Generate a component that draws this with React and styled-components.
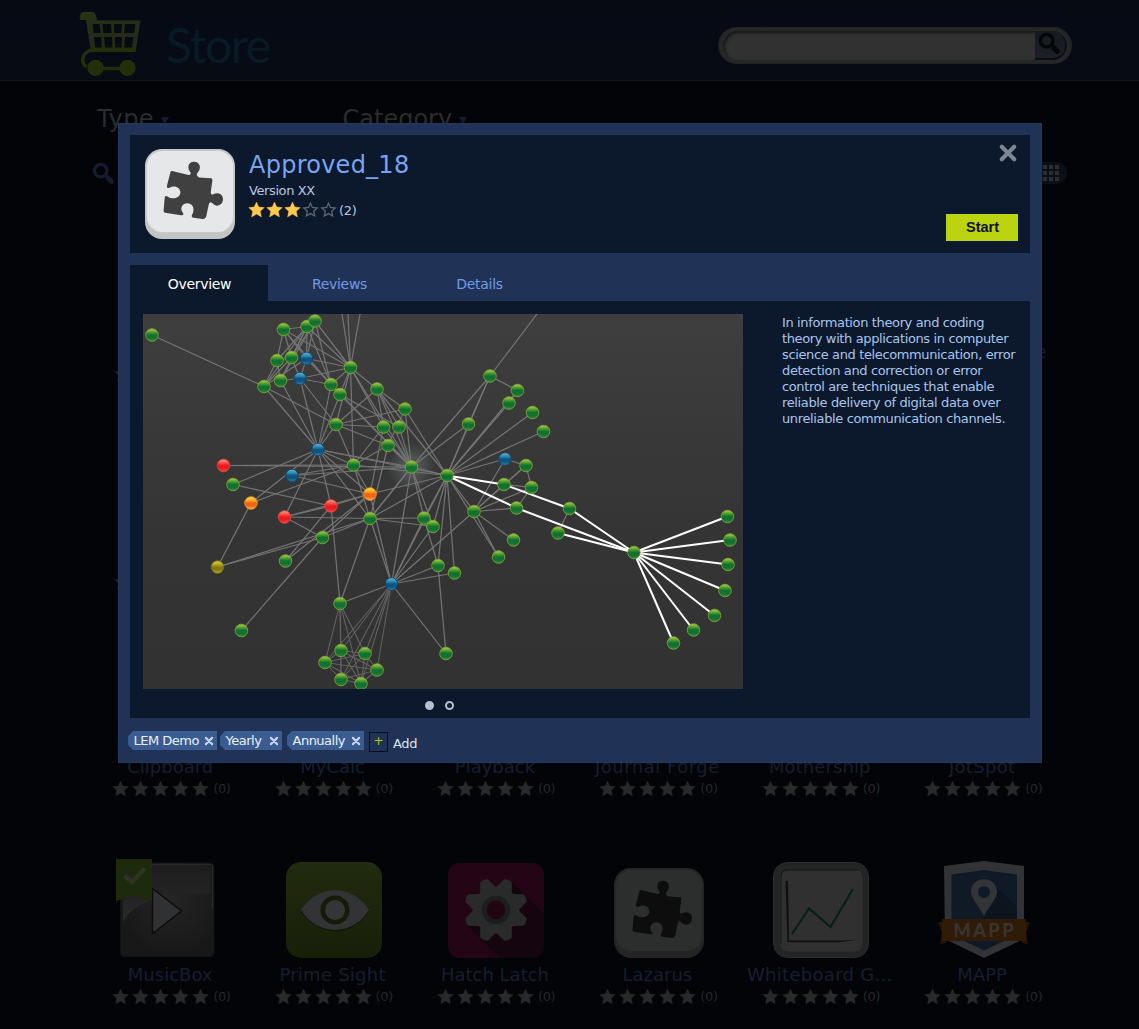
import React from "react";
import styled, { createGlobalStyle } from "styled-components";

const Global = createGlobalStyle`
  * { box-sizing: border-box; }
  body { margin: 0; background: #020408; font-family: "DejaVu Sans", Verdana, sans-serif; }
  svg { display: block; }
`;

/* ---------- store page ---------- */
const Page = styled.div`
  width: 1139px;
  height: 1029px;
  overflow: hidden;
  background: #020408;
`;
const TopBar = styled.header`
  display: flex;
  justify-content: space-between;
  align-items: flex-start;
  height: 81px;
  padding: 0 67px 0 78px;
  border-bottom: 1px solid #10151e;
  background: linear-gradient(#060a12, #050a14 25%, #060b14);
`;
const Brand = styled.div`
  display: flex;
  gap: 22px;
  padding-top: 10px;
`;
const BrandName = styled.div`
  font: 400 48px/60px Lato, "Open Sans", sans-serif;
  color: #071a26;
  letter-spacing: -1.5px;
  padding-top: 5px;
`;
const Search = styled.div`
  display: flex;
  width: 354px;
  height: 37px;
  margin-top: 27px;
  padding: 4px 5px;
  border-radius: 19px;
  background: #262727;
  box-shadow: inset 0 0 2px #181b20;
`;
const SearchField = styled.div`
  flex: 1;
  border-radius: 15px 0 0 15px;
  background: #313131;
  box-shadow: inset 2px 2px 3px #17191d;
`;
const SearchButton = styled.div`
  width: 32px;
  border-radius: 0 15px 15px 0;
  background: linear-gradient(#151920, #1b2028);
  border-bottom: 2px solid #0a0d13;
  border-right: 2px solid #0e1218;
  padding: 1px 0 0 3px;
`;
const Filters = styled.div`
  display: flex;
  height: 73px;
  padding: 24px 0 0 97px;
`;
const Filter = styled.div`
  display: flex;
  align-items: baseline;
  gap: 7px;
  width: 245.5px;
  font-size: 24px;
  line-height: 28px;
  letter-spacing: ${(p) => p.$track || 0}px;
  color: #2b2c2d;
`;
const Caret = styled.i`
  align-self: flex-start;
  margin-top: 12px;
  border: 4.5px solid transparent;
  border-top: 7px solid #131d31;
  border-bottom: 0;
`;
const Tools = styled.div`
  display: flex;
  justify-content: space-between;
  height: 77px;
  padding: 8px 72px 0 92px;
`;
const GridToggle = styled.div`
  display: grid;
  grid-template-columns: repeat(3, 4px);
  grid-auto-rows: 4px;
  gap: 2px;
  height: 22px;
  width: 32px;
  padding: 3px 0 0 8px;
  border-radius: 0 11px 11px 0;
  background: #0b0f18;
`;
const Cell = styled.i`
  background: #2c2d2f;
`;
const Apps = styled.main`
  display: grid;
  grid-template-columns: repeat(6, 162.4px);
  grid-auto-rows: 207.6px;
  padding-left: 89px;
`;
const Tile = styled.section`
  display: flex;
  flex-direction: column;
  align-items: center;
`;
const TileIcon = styled.div`
  display: flex;
  align-items: flex-end;
  height: 104px;
  margin-left: ${(p) => p.$shift || 0}px;
`;
const TileName = styled.div`
  height: 31px;
  font-size: 18px;
  line-height: 34px;
  color: #131f31;
  white-space: nowrap;
  letter-spacing: ${(p) => p.$track || 0}px;
  margin-left: ${(p) => p.$shift || 0}px;
`;
const Stars = styled.div`
  display: flex;
  align-items: center;
  gap: ${(p) => p.$gap}px;
  height: 15px;
  margin-left: ${(p) => p.$shift || 0}px;
`;
const Count = styled.span`
  font-size: 13px;
  letter-spacing: -0.35px;
  line-height: 15px;
  color: ${(p) => p.$color};
  min-width: 18px;
  position: relative;
  top: ${(p) => p.$drop || 0}px;
`;

/* ---------- listing window ---------- */
const Layer = styled.div`
  position: fixed;
  inset: 0;
  padding: 123px 0 0 118px;
`;
const Window = styled.div`
  display: flex;
  flex-direction: column;
  width: 924px;
  height: 640px;
  padding: 12px 12px 0;
  background: #203255;
  box-shadow: inset 0 0 0 1px #243960;
`;
const Summary = styled.div`
  display: flex;
  justify-content: space-between;
  height: 118px;
  padding: 14px 12px 12px 15px;
  background: #0c182b;
`;
const Identity = styled.div`
  display: flex;
  gap: 14px;
`;
const Title = styled.div`
  font-size: 24px;
  line-height: 28px;
  letter-spacing: 0.25px;
  color: #78a4f2;
  padding-top: 2px;
`;
const Version = styled.div`
  font-size: 13px;
  letter-spacing: -0.4px;
  line-height: 20px;
  color: #b4c8e4;
  padding: 2px 0 1px;
`;
const Actions = styled.div`
  display: flex;
  flex-direction: column;
  justify-content: space-between;
  align-items: flex-end;
`;
const Close = styled.button`
  border: 0;
  padding: 0;
  margin: -6px 0 0 0;
  background: none;
`;
const Start = styled.button`
  width: 72px;
  height: 27px;
  border: 0;
  padding: 0 0 1px 1px;
  background: #bcd40f;
  color: #111;
  font: bold 14.5px "Liberation Sans", Arial, sans-serif;
`;
const Tabs = styled.nav`
  display: flex;
  gap: 2px;
  margin-top: 12px;
  height: 36px;
`;
const Tab = styled.div`
  width: 138px;
  padding-left: 1px;
  text-align: center;
  font-size: 14px;
  letter-spacing: -0.3px;
  line-height: 38px;
  color: ${(p) => (p.$active ? "#fff" : "#6f9be8")};
  background: ${(p) => (p.$active ? "#0c182b" : "transparent")};
`;
const Overview = styled.div`
  display: flex;
  height: 417px;
  padding: 13px 12px 0 13px;
  background: #0c182b;
`;
const Gallery = styled.div`
  width: 600px;
  flex: none;
`;
const Pager = styled.div`
  display: flex;
  justify-content: center;
  gap: 11px;
  padding: 12px 8px 0 0;
`;
const Dot = styled.i`
  width: 9px;
  height: 9px;
  border-radius: 50%;
  border: 2px solid #b3c0d8;
  background: ${(p) => (p.$on ? "#b3c0d8" : "transparent")};
`;
const Blurb = styled.p`
  margin: 1px 0 0 39px;
  width: 236px;
  font-size: 13px;
  letter-spacing: -0.37px;
  line-height: 16px;
  color: #a9c5ee;
  white-space: pre;
`;
const TagBar = styled.div`
  display: flex;
  align-items: flex-start;
  padding-top: 13px;
  margin-left: -2px;
`;
const Tag = styled.div`
  display: flex;
  justify-content: space-between;
  align-items: center;
  width: ${(p) => p.$w}px;
  height: 19px;
  margin-right: ${(p) => p.$gap}px;
  padding: 1px 3px 0 5.5px;
  font-size: 13px;
  letter-spacing: -0.5px;
  line-height: 20px;
  color: #e9f0fb;
  white-space: nowrap;
  background: #3b5c91;
  clip-path: polygon(5px 0, 100% 0, 100% 100%, 5px 100%, 0 72%, 0 28%);
`;
const AddBox = styled.div`
  width: 19px;
  height: 20px;
  margin-top: 1px;
  border: 1px solid #0a101c;
  color: #a9c820;
  font-size: 12px;
  line-height: 17px;
  text-align: center;
`;
const AddLabel = styled.div`
  margin: 3px 0 0 5px;
  font-size: 13px;
  letter-spacing: -0.3px;
  line-height: 19px;
  color: #dbe6f7;
`;

/* ---------- drawings ---------- */
const STAR = "M7.5 0 9.800 5 15.300 5.600 11.300 9.300 12.400 14.900 7.500 12.100 2.600 14.900 3.700 9.300 -.3 5.600 5.200 5Z";
const Star = ({ color, hollow }) => (
  <svg width="15" height="15" viewBox="0 0 15 15" overflow="visible">
    <path
      d={hollow ? "M7.5 1.2 9.400 5.400 14.300 6 10.700 9.300 11.700 14 7.500 11.600 3.300 14 4.300 9.300 .7 6 5.600 5.400Z" : STAR}
      fill={hollow ? "none" : color}
      stroke={color}
      strokeWidth={hollow ? 1.3 : 0.4}
    />
  </svg>
);
const Rating = ({ filled, color, empty, gap, count, textColor, shift, drop }) => (
  <Stars $gap={gap} $shift={shift}>
    {[0, 1, 2, 3, 4].map((i) => (
      <Star key={i} color={i < filled ? color : empty} hollow={i >= filled} />
    ))}
    <Count $color={textColor} $drop={drop}>{count}</Count>
  </Stars>
);
const Cross = ({ size, color, width }) => (
  <svg width={size} height={size} viewBox="0 0 16 16">
    <path d="M3 3l10 10M13 3l-10 10" stroke={color} strokeWidth={width} strokeLinecap="round" />
  </svg>
);
const Lens = ({ color, size }) => (
  <svg width={size} height={size} viewBox="0 0 22 22">
    <circle cx="8.3" cy="8.3" r="6" fill="none" stroke={color} strokeWidth="3.2" />
    <path d="M12.6 12.6 19 19" stroke={color} strokeWidth="2.6" />
    <path d="M15.3 15.3 18.6 18.6" stroke={color} strokeWidth="4.8" strokeLinecap="round" />
  </svg>
);
const Cart = () => (
  <svg width="66" height="68" viewBox="78 10 66 68" fill="none">
    <defs>
      <linearGradient id="cart" x1="0" y1="0" x2="0" y2="1">
        <stop offset="0" stopColor="#293215" />
        <stop offset=".5" stopColor="#24291a" />
        <stop offset=".68" stopColor="#22300b" />
        <stop offset="1" stopColor="#223009" />
      </linearGradient>
    </defs>
    <path d="M80 20q-1-8 4-8h8q3 0 4 4l1.500 4.500H140.500L135.500 52H91q-6 1-6.500 8 .5 4.500 3 5.500-1.500 2-1 3-6-3-5.500-9.500 1-8 9.500-10.500L86 20Z" fill="url(#cart)" />
    <g fill="#060a12">
      <path d="M92.500 24h7l1.200 9h-7.100zM102.500 24h8.500l.6 9h-8.200zM114 24h8l-.7 9h-7zM125 24h10.500l-1.500 9h-9.800z" />
      <path d="M94 37h7.200l.7 10.500h-6.700zM104.200 37h7.800l.3 10.500h-7.200zM115 37h7l-.6 10.500h-6.200zM125 37h8.500l-1.700 10.500h-7.500z" />
    </g>
    <path d="M90 68.500h40" stroke="#202d0c" strokeWidth="3.500" />
    <circle cx="95.500" cy="68" r="8.200" fill="#223009" />
    <circle cx="127.500" cy="68" r="8.200" fill="#223009" />
  </svg>
);
const Puzzle = ({ face, side, edge, ink }) => (
  <svg width="90" height="90" viewBox="0 0 90 90">
    <rect width="90" height="90" rx="17" fill={side} />
    <rect x=".6" y=".6" width="88.8" height="83" rx="17" fill={edge} />
    <rect x="2" y="2" width="86" height="81" rx="15.500" fill={face} />
    <path
      fill={ink}
      d="M27 22 42.500 25.800Q46.500 26.300 45.600 23.600C42 20 42.500 12.800 49 12.800c6.500 0 7.500 7 3.700 10.800-1.600 2.200-.7 4.200 1.600 4.800L66 29.200q1.600.2 1.400 2L65.700 43.500q0 2.700 2.300 1.900c4.200-2.700 10-.7 10 4.700 0 6.700-7 8.500-10.500 4.200-1.700-1.700-3.300-1-3.800 1.500L61.200 67.500Q60.200 70.300 57.500 70L48.500 68.800C46 68 46.500 66 47.800 64.400 49 61.500 49.500 54.700 42.500 54.200c-6.200 0-7.500 6-4.800 9.400 1.800 2-.2 3.200-1.600 2.600L20 63.800q-1.600-.4-1.400-2L19.700 48.500q.7-2.500 3.200-.7c5 3.200 11.500 1.200 12.500-3.500.5-6-6-8.500-10.500-5.800-2 1.200-3.300.5-2.900-2L25.500 23q.3-1.200 1.500-1Z"
    />
  </svg>
);
const MusicBox = () => (
  <svg width="100" height="100" viewBox="0 0 100 100">
    <defs>
      <radialGradient id="mb" cx=".55" cy=".4" r=".6">
        <stop offset="0" stopColor="#242424" />
        <stop offset="1" stopColor="#181818" />
      </radialGradient>
      <linearGradient id="shine" x1="0" y1="0" x2="0" y2="1">
        <stop offset="0" stopColor="#1d1d1d" />
        <stop offset="1" stopColor="#292929" />
      </linearGradient>
    </defs>
    <rect x="4.500" y="5" width="93.500" height="93.500" rx="4" fill="url(#mb)" stroke="#111214" />
    <path d="M7 64Q22 34 95 35.500V17q0-10-9-10H7Z" fill="url(#shine)" />
    <path d="M7 6.300h87q2.500 0 2.500 3V50" stroke="#2d2d2d" fill="none" />
    <path d="M36.500 30.500V75.500L65.500 53Z" fill="#303132" stroke="#0d0d0d" strokeWidth="1.500" />
    <path d="M0 1h36v42l-18-5.500L0 43Z" fill="#1e2a0c" />
    <path d="M8.500 17.500l7.500 6.500L28.500 10.500" stroke="#303226" strokeWidth="4.500" fill="none" />
  </svg>
);
const Eye = () => (
  <svg width="96" height="96" viewBox="0 0 96 96">
    <defs>
      <linearGradient id="eye" x1="0" y1="0" x2="0" y2="1">
        <stop offset="0" stopColor="#212b0e" />
        <stop offset="1" stopColor="#181f09" />
      </linearGradient>
    </defs>
    <rect width="96" height="96" rx="15" fill="url(#eye)" />
    <path d="M15 50C34 76 64 76 83 50 64 23 34 23 15 50Z" fill="#12180a" />
    <path d="M15 48C31 21.500 67 21.500 83 48 67 74.500 31 74.500 15 48Z" fill="#323335" />
    <circle cx="49" cy="48" r="12.300" fill="#343537" stroke="#151b07" strokeWidth="4.500" />
  </svg>
);
const Gear = () => (
  <svg width="96" height="95" viewBox="0 0 96 95">
    <defs>
      <clipPath id="gc"><rect width="96" height="95" rx="11" /></clipPath>
    </defs>
    <g clipPath="url(#gc)">
      <rect width="96" height="95" fill="#230515" />
      <path d="M63 18 96 51V95H52L20 63Z" fill="#15050e" />
    </g>
    <g fill="#292b2a">
      {[22.5, 67.5, 112.5, 157.5, 202.5, 247.5, 292.5, 337.5].map((a) => (
        <path key={a} transform={`rotate(${a} 48 47)`} d="M39.500 26 44 15.500Q48 13.800 52 15.500L56.500 26Z" />
      ))}
      <circle cx="48" cy="47" r="23.500" />
    </g>
    <circle cx="48" cy="47" r="11.700" fill="#220514" stroke="#1c1d1d" strokeWidth="5" />
  </svg>
);
const Whiteboard = () => (
  <svg width="96" height="96" viewBox="0 0 96 96">
    <rect x=".5" y=".5" width="95" height="95" rx="14" fill="#232424" stroke="#2b2c2c" />
    <rect x="7" y="7.500" width="82.500" height="82" rx="8" fill="#303030" />
    <path d="M8 82V15q0-7 7-7H85" stroke="#131414" fill="none" />
    <path d="M12.500 19h2.600L16 78.500l52 0 16-.7-18 2.500H14.500Z" fill="#101010" />
    <path d="M19 72 36 46.500 57.500 65 80 27" stroke="#062016" strokeWidth="2.200" fill="none" />
  </svg>
);
const Mapp = () => (
  <svg width="92" height="97" viewBox="0 0 92 97">
    <path d="M46 0 86 5V78L46 97 7 78 6 5Z" fill="#323334" />
    <path d="M46 9 79 13.500V74L46 89.500 13.500 74V13.500Z" fill="#0f1a26" />
    <path d="M57 24 79 46V58H46V54Z" fill="#0c141d" />
    <path fillRule="evenodd" d="M46 18c-7.500 0-13 5.500-13 13 0 6 7 13 13 24 6-11 13-18 13-24 0-7.500-5.500-13-13-13Zm0 7a6 6 0 1 1 0 12 6 6 0 0 1 0-12Z" fill="#333436" />
    <path d="M0 61H8V82L2 83 4 72ZM92 61H84V82L90 83 88 72Z" fill="#2a1307" />
    <rect x="4" y="58" width="84" height="22" fill="#301a08" />
    <text x="15.500" y="76" fontFamily="Lato, sans-serif" fontWeight="900" fontSize="18" textLength="60" fill="#39342f">MAPP</text>
  </svg>
);

/* ---------- network graph ---------- */
const N = {
  a: [152, 335], b: [283.5, 329.5], c: [307, 326.5], d: [315, 321], e: [277, 360.5], f: [291.5, 357.5],
  g: [306.5, 358.5, "b"], h: [264, 386.5], i: [280.5, 380.5], j: [300, 378.5, "b"], k: [350.5, 367.5],
  l: [331, 384.5], m: [340, 394.5], n: [377, 389], o: [405, 409], p: [336, 424.5], q: [383.5, 427],
  r: [399, 427], s: [388, 445.5], t: [318, 449.5, "b"], u: [353.5, 465], v: [411.5, 467], w: [447, 475.5],
  x: [223.5, 465.5, "r"], y: [233, 484.5], z: [292, 475.5, "b"], A: [251, 503, "o"], B: [370, 494, "o"],
  C: [331, 506, "r"], D: [284.5, 517, "r"], E: [370, 518.5], F: [322.5, 537.5], G: [285.5, 561],
  H: [217.5, 567, "y"], I: [241.5, 630.5], J: [340, 603.5], K: [391.5, 584, "b"], L: [424, 518],
  M: [433, 526.5], N: [438, 565.5], O: [454.5, 573], P: [474, 511.5], Q: [516.5, 508], R: [513.5, 540],
  S: [498.5, 557], T: [446, 653.5], U: [504, 484.5], V: [505, 459, "b"], W: [526, 465.5], X: [531.5, 487.5],
  Y: [490, 376], Z: [517.5, 390.5], aa: [509, 403], ab: [532.5, 412.5], ac: [543.5, 431.5], ad: [468.5, 424],
  ae: [569.5, 508.5], af: [558, 533], ag: [634, 552.5], ah: [727.5, 516.5], ai: [730, 540], aj: [728, 564.5],
  ak: [725, 590.5], al: [714.5, 615.5], am: [693.5, 630], an: [673.5, 643], ao: [325, 662.5], ap: [341, 650.5],
  aq: [365, 653.5], ar: [377, 670], as: [341, 679.5], at: [361, 683.5],
};
const OFF = { t1: [342, 314], t2: [348, 314], t3: [360, 314], t4: [537, 314] };
const parse = (s) => s.trim().split(/\s+/).map((p) => p.split("-"));
const GREY = parse(`
  a-h b-c b-e b-f b-g b-k c-f c-g c-h c-e c-k c-l c-i d-i d-f d-k d-l d-g d-k b-l
  e-i e-h f-j f-h g-k g-j g-l g-h i-j j-k j-l j-p j-t i-t h-t h-p l-k m-k l-t m-t m-r m-v l-v
  k-t1 k-t2 k-t3 k-p k-u k-v k-n k-q n-p n-o n-q n-r n-w n-v o-p o-v o-w o-s p-q p-s p-u p-t
  q-u q-B s-v s-u s-E q-v r-v t-u t-v t-w t-y t-A t-C t-B t-E t-D x-u x-v u-w u-z u-A u-E u-B z-B z-v
  v-L v-M v-K v-E v-w v-Y v-ad w-ad w-Y w-aa w-Z w-ab w-ac w-V w-K w-L w-M w-N w-O w-P w-E w-B w-S
  y-C B-D B-F C-D C-G D-E D-F F-H F-I F-E H-E A-H B-G B-K B-C E-K E-J C-J E-L E-M E-v
  K-J K-L K-M K-P K-N K-O K-T L-N N-T P-Q P-R P-S P-U P-V P-X P-W U-X U-W V-W W-X X-Q Y-Z Y-t4 Y-ad Z-aa ae-af`);
const CLUSTER = parse(`
  J-ao J-ap J-aq J-as J-at K-ao K-ap K-aq K-ar K-as K-at ao-ap ao-aq ao-ar ao-as ap-aq ap-ar ap-as ap-at
  aq-ar aq-as aq-at ar-as ar-at as-at ao-at`);
const WHITE = parse("w-U U-ae w-Q Q-ag ae-ag af-ag ag-ah ag-ai ag-aj ag-ak ag-al ag-am ag-an");
const TONES = {
  g: ["#b4d048", "#3f962b", "#127030", "#2a8f38", "#86a433"],
  b: ["#6fb4d6", "#2587b4", "#105580", "#2a88ba", "#12405e"],
  r: ["#ffa08a", "#f84840", "#e81c22", "#fa4a40", "#e04438"],
  o: ["#ffdc50", "#ffa51a", "#f2621a", "#ffb83a", "#ee9a26"],
  y: ["#d8d046", "#b3a81c", "#857b0c", "#bdb22a", "#766f1c"],
};
const Edges = ({ list, color, width }) => (
  <g stroke={color} strokeWidth={width}>
    {list.map(([p, q], i) => {
      const s = N[p];
      const e = N[q] || OFF[q];
      return <line key={i} x1={s[0]} y1={s[1]} x2={e[0]} y2={e[1]} />;
    })}
  </g>
);
const Network = () => (
  <svg width="600" height="375" viewBox="143 314 600 375">
    <defs>
      <linearGradient id="bg" x1="0" y1="0" x2="0" y2="1">
        <stop offset="0" stopColor="#3e3e3e" />
        <stop offset=".6" stopColor="#343434" />
        <stop offset="1" stopColor="#323232" />
      </linearGradient>
      <radialGradient id="glow">
        <stop offset="0" stopColor="#9fb0b0" stopOpacity=".36" />
        <stop offset="1" stopColor="#9fb0b0" stopOpacity="0" />
      </radialGradient>
      {Object.entries(TONES).map(([k, t]) => (
        <linearGradient key={k} id={`n-${k}`} x1="0" y1="0" x2="0" y2="1">
          <stop offset="0" stopColor={t[0]} />
          <stop offset=".32" stopColor={t[1]} />
          <stop offset=".5" stopColor={t[2]} />
          <stop offset=".72" stopColor={t[2]} />
          <stop offset="1" stopColor={t[3]} />
        </linearGradient>
      ))}
    </defs>
    <rect x="143" y="314" width="600" height="375" fill="url(#bg)" />
    <circle cx="411.500" cy="467" r="24" fill="url(#glow)" />
    <Edges list={CLUSTER} color="#626262" width="1.050" />
    <Edges list={GREY} color="#757575" width="1.200" />
    <Edges list={WHITE} color="#fff" width="2" />
    {Object.entries(N).map(([id, [x, y, tone = "g"]]) => (
      <circle key={id} cx={x} cy={y} r="6.300" fill={`url(#n-${tone})`} stroke={TONES[tone][4]} strokeWidth=".8" />
    ))}
  </svg>
);

const LISTINGS = [
  { name: "MusicBox", icon: <MusicBox />, shift: -9 },
  { name: "Prime Sight", icon: <Eye />, track: 0.25, shift: 2 },
  { name: "Hatch Latch", icon: <Gear />, shift: 2 },
  { name: "Lazarus", icon: <Puzzle face="#2c2d2d" side="#242424" edge="#262727" ink="#0d0d0d" />, shift: 4 },
  { name: "Whiteboard G...", icon: <Whiteboard />, shift: 3, track: 0.3 },
  { name: "MAPP", icon: <Mapp />, shift: 4 },
];
const PREVIOUS = [
  { name: "Clipboard" },
  { name: "MyCalc" },
  { name: "Playback" },
  { name: "Journal Forge", track: 0.5 },
  { name: "Mothership", track: 0.1 },
  { name: "JotSpot", track: 0.3 },
];

const TileRating = () => (
  <Rating filled={5} color="#282929" gap={5} count="(0)" textColor="#252627" shift={4} />
);
const AppTile = ({ name, icon, shift, track }) => (
  <Tile>
    <TileIcon $shift={shift}>{icon}</TileIcon>
    <TileName $track={track}>{name}</TileName>
    <TileRating />
  </Tile>
);
const EdgeTile = ({ name, stars }) => (
  <Tile>
    <TileIcon />
    <TileName $shift={118}>{name}</TileName>
    {stars && (
      <Stars $gap={5} $shift={-95}>
        <Star color="#24231f" />
      </Stars>
    )}
  </Tile>
);

export default function App() {
  return (
    <Page>
      <Global />
      <TopBar>
        <Brand>
          <Cart />
          <BrandName>Store</BrandName>
        </Brand>
        <Search>
          <SearchField />
          <SearchButton><Lens color="#050608" size={23} /></SearchButton>
        </Search>
      </TopBar>
      <Filters>
        <Filter $track={0.5}>Type<Caret /></Filter>
        <Filter>Category<Caret /></Filter>
      </Filters>
      <Tools>
        <Lens color="#141d2d" size={23} />
        <GridToggle>{Array.from({ length: 9 }, (_, i) => <Cell key={i} />)}</GridToggle>
      </Tools>
      <Apps>
        <EdgeTile stars />
        <Tile /><Tile /><Tile /><Tile />
        <EdgeTile name="e" />
        <EdgeTile stars />
        <Tile /><Tile /><Tile /><Tile /><Tile />
        {PREVIOUS.map((app) => <AppTile key={app.name} {...app} />)}
        {LISTINGS.map((app) => <AppTile key={app.name} {...app} />)}
      </Apps>

      <Layer>
        <Window>
          <Summary>
            <Identity>
              <Puzzle face="#e6e7e9" side="#c3c5c4" edge="#c9cacb" ink="#404040" />
              <div>
                <Title>Approved_18</Title>
                <Version>Version XX</Version>
                <Rating filled={3} color="#ffc94d" empty="#5d6675" gap={3} count="(2)" textColor="#b4c8e4" drop={1} />
              </div>
            </Identity>
            <Actions>
              <Close aria-label="Close"><Cross size={20} color="#7d8695" width={3.3} /></Close>
              <Start>Start</Start>
            </Actions>
          </Summary>
          <Tabs>
            <Tab $active>Overview</Tab>
            <Tab>Reviews</Tab>
            <Tab>Details</Tab>
          </Tabs>
          <Overview>
            <Gallery>
              <Network />
              <Pager><Dot $on /><Dot /></Pager>
            </Gallery>
            <Blurb>{`In information theory and coding
theory with applications in computer
science and telecommunication, error
detection and correction or error
control are techniques that enable
reliable delivery of digital data over
unreliable communication channels.`}</Blurb>
          </Overview>
          <TagBar>
            <Tag $w={89} $gap={3}>LEM Demo<Cross size={10} color="#c3d3ee" width={3.4} /></Tag>
            <Tag $w={62} $gap={5}>Yearly<Cross size={10} color="#c3d3ee" width={3.4} /></Tag>
            <Tag $w={77} $gap={5}>Annually<Cross size={10} color="#c3d3ee" width={3.4} /></Tag>
            <AddBox>+</AddBox>
            <AddLabel>Add</AddLabel>
          </TagBar>
        </Window>
      </Layer>
    </Page>
  );
}
